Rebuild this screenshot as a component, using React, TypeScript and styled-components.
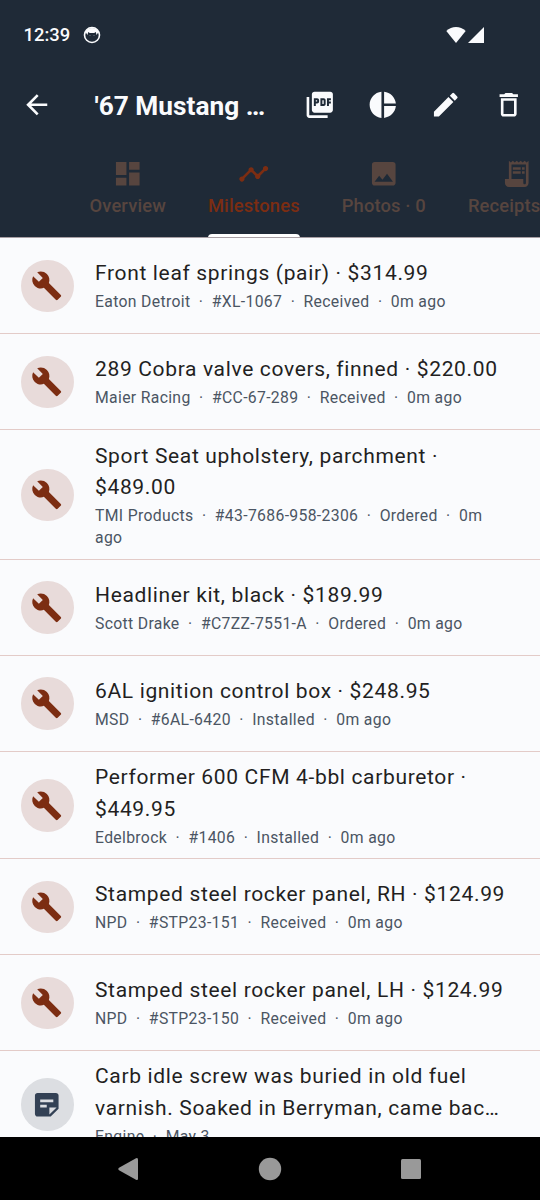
import React from "react";
import styled, { createGlobalStyle } from "styled-components";
import {
  MdArrowBack,
  MdBuild,
  MdDashboard,
  MdDeleteOutline,
  MdEdit,
  MdImage,
  MdPictureAsPdf,
  MdPieChart,
  MdReceiptLong,
  MdStickyNote2,
  MdTimeline,
} from "react-icons/md";

const GlobalStyle = createGlobalStyle`
  * { box-sizing: border-box; }
  body { margin: 0; background: #000; }
`;

const Screen = styled.div`
  width: 540px;
  height: 1200px;
  overflow: hidden;
  display: flex;
  flex-direction: column;
  background: #fafbfd;
  font-family: Roboto, "Liberation Sans", sans-serif;
`;

const Header = styled.header`
  flex: none;
  height: 238px;
  display: flex;
  flex-direction: column;
  background: #1f2a37;
  border-bottom: 1px solid #a79ea3;
  color: #fafbfd;
`;

const StatusBar = styled.div`
  flex: none;
  height: 68px;
  padding: 2px 56px 0 23.5px;
  display: flex;
  align-items: center;
`;

const Clock = styled.span`
  font-size: 18.4px;
  font-weight: 500;
  line-height: 24px;
  width: 59.5px;
`;

const Signals = styled.div`
  margin-left: auto;
  display: flex;
  gap: 2px;
`;

const AppBar = styled.div`
  flex: none;
  height: 74px;
  display: flex;
  align-items: center;
`;

const IconButton = styled.button<{ $width?: number }>`
  flex: none;
  width: ${(p) => p.$width ?? 63}px;
  height: 63px;
  padding: 0;
  border: 0;
  background: none;
  color: inherit;
  display: flex;
  align-items: center;
  justify-content: center;
  svg { width: 31.5px; height: 31.5px; }
`;

const Title = styled.h1`
  flex: 1;
  margin: 0;
  padding-left: 21px;
  padding-top: 1px;
  font-size: 26.25px;
  font-weight: 700;
  line-height: 34px;
  white-space: nowrap;
`;

const Tabs = styled.nav`
  flex: none;
  height: 95px;
  padding-left: 68.5px;
  display: flex;
  overflow: hidden;
`;

const Tab = styled.div<{ $active?: boolean }>`
  flex: none;
  height: 95px;
  padding: 0 21px;
  color: ${(p) => (p.$active ? "#7c2d12" : "#57453f")};
`;

const TabContent = styled.div`
  position: relative;
  height: 95px;
  padding-top: 16.4px;
  display: flex;
  flex-direction: column;
  align-items: center;
  svg { width: 31.5px; height: 31.5px; }
`;

const TabLabel = styled.span`
  margin-top: 3.2px;
  font-size: 18.375px;
  font-weight: 500;
  line-height: 26px;
  letter-spacing: 0.13px;
  white-space: nowrap;
`;

const Indicator = styled.div`
  position: absolute;
  left: 0;
  right: 0;
  bottom: -1px;
  height: 4px;
  border-radius: 4px 4px 0 0;
  background: #fff;
`;

const List = styled.main`
  flex: 1;
  min-height: 0;
  overflow: hidden;
`;

const Row = styled.div<{ $height: number }>`
  height: ${(p) => p.$height}px;
  padding: 1px 31.5px 0 21px;
  display: flex;
  align-items: center;
  gap: 21.5px;
  border-bottom: 1.3px solid #e3cbc8;
`;

const Avatar = styled.div<{ $note?: boolean }>`
  flex: none;
  width: 52.5px;
  height: 52.5px;
  border-radius: 50%;
  display: flex;
  align-items: center;
  justify-content: center;
  background: ${(p) => (p.$note ? "#dcdee2" : "#e8dbda")};
  color: ${(p) => (p.$note ? "#334155" : "#7c2d12")};
  svg { width: 31.5px; height: 31.5px; margin-right: 1px; }
`;

const RowText = styled.div`
  flex: 1;
  min-width: 0;
`;

const RowTitle = styled.div<{ $raised: boolean }>`
  margin-top: ${(p) => (p.$raised ? -1 : 0)}px;
  font-size: 21px;
  line-height: 31.5px;
  letter-spacing: 0.656px;
  color: #231f1f;
`;

const RowMeta = styled.div`
  margin-top: 1.6px;
  font-size: 15.75px;
  line-height: 21.6px;
  letter-spacing: 0.328px;
  color: #4b5563;
  white-space: pre-wrap;
`;

const NavBar = styled.footer`
  flex: none;
  height: 63px;
  display: flex;
  align-items: center;
  justify-content: center;
  gap: 117px;
  background: #000;
  color: #999;
  svg { display: block; width: 24px; height: 24px; }
`;

type Item = { title: string; meta: string[]; height: number; note?: boolean };

const SINGLE = 95.9;

const items: Item[] = [
  { title: "Front leaf springs (pair) · $314.99", meta: ["Eaton Detroit", "#XL-1067", "Received", "0m ago"], height: SINGLE },
  { title: "289 Cobra valve covers, finned · $220.00", meta: ["Maier Racing", "#CC-67-289", "Received", "0m ago"], height: SINGLE },
  { title: "Sport Seat upholstery, parchment · $489.00", meta: ["TMI Products", "#43-7686-958-2306", "Ordered", "0m ago"], height: 130 },
  { title: "Headliner kit, black · $189.99", meta: ["Scott Drake", "#C7ZZ-7551-A", "Ordered", "0m ago"], height: SINGLE },
  { title: "6AL ignition control box · $248.95", meta: ["MSD", "#6AL-6420", "Installed", "0m ago"], height: SINGLE },
  { title: "Performer 600 CFM 4-bbl carburetor · $449.95", meta: ["Edelbrock", "#1406", "Installed", "0m ago"], height: 107.4 },
  { title: "Stamped steel rocker panel, RH · $124.99", meta: ["NPD", "#STP23-151", "Received", "0m ago"], height: SINGLE },
  { title: "Stamped steel rocker panel, LH · $124.99", meta: ["NPD", "#STP23-150", "Received", "0m ago"], height: SINGLE },
  { title: "Carb idle screw was buried in old fuel varnish. Soaked in Berryman, came bac…", meta: ["Engine", "May 3"], height: 107.4, note: true },
];

const CatIcon = () => (
  <svg width="18" height="18" viewBox="0 0 18 18" fill="none">
    <circle cx="9" cy="9" r="7.5" stroke="currentColor" strokeWidth="1.6" />
    <path d="M2.5 6C4 .8 14 .8 15.5 6L13.5 9 12.8 6 11.2 7H6.8L5.2 6 4.5 9Z" fill="currentColor" />
    <circle cx="7" cy="9.4" r=".4" fill="currentColor" />
    <circle cx="11" cy="9.4" r=".4" fill="currentColor" />
  </svg>
);

export default function App() {
  return (
    <Screen>
      <GlobalStyle />
      <Header>
        <StatusBar>
          <Clock>12:39</Clock>
          <CatIcon />
          <Signals>
            <svg width="20" height="18" viewBox="0 0 20 18">
              <path d="M.3 5.1C5.8-.3 14.2-.3 19.7 5.1L10 17Z" fill="currentColor" />
            </svg>
            <svg width="16" height="18" viewBox="0 0 16 18">
              <path d="M16 1v16H0Z" fill="currentColor" />
            </svg>
          </Signals>
        </StatusBar>
        <AppBar>
          <IconButton $width={73.5} aria-label="Back"><MdArrowBack /></IconButton>
          <Title>'67 Mustang …</Title>
          <IconButton aria-label="Export PDF"><MdPictureAsPdf /></IconButton>
          <IconButton aria-label="Stats"><MdPieChart /></IconButton>
          <IconButton aria-label="Edit"><MdEdit /></IconButton>
          <IconButton aria-label="Delete"><MdDeleteOutline /></IconButton>
        </AppBar>
        <Tabs>
          <Tab><TabContent><MdDashboard /><TabLabel>Overview</TabLabel></TabContent></Tab>
          <Tab $active>
            <TabContent><MdTimeline /><TabLabel>Milestones</TabLabel><Indicator /></TabContent>
          </Tab>
          <Tab><TabContent><MdImage /><TabLabel>Photos · 0</TabLabel></TabContent></Tab>
          <Tab><TabContent><MdReceiptLong /><TabLabel>Receipts · 0</TabLabel></TabContent></Tab>
        </Tabs>
      </Header>
      <List>
        {items.map((item) => (
          <Row key={item.title} $height={item.height}>
            <Avatar $note={item.note}>{item.note ? <MdStickyNote2 /> : <MdBuild />}</Avatar>
            <RowText>
              <RowTitle $raised={item.height === SINGLE}>{item.title}</RowTitle>
              <RowMeta>{item.meta.join("  ·  ")}</RowMeta>
            </RowText>
          </Row>
        ))}
      </List>
      <NavBar>
        <svg viewBox="0 0 24 24"><path d="M19 1.2Q21 .3 21 2.5v19Q21 23.7 19 22.8L2 13.2Q.2 12 2 10.8Z" fill="currentColor" /></svg>
        <svg viewBox="0 0 24 24"><circle cx="12" cy="12" r="11.2" fill="currentColor" /></svg>
        <svg viewBox="0 0 24 24"><rect x="2" y="2" width="20" height="20" rx="1.5" fill="currentColor" /></svg>
      </NavBar>
    </Screen>
  );
}
